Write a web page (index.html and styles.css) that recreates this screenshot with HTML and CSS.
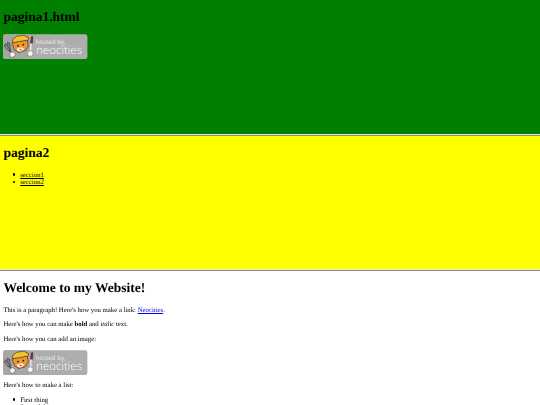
FILE: index.html
```html
<!DOCTYPE html>
<html lang="en">
<head>
<meta charset="utf-8">
<title>Frames</title>
<link rel="stylesheet" href="styles.css">
</head>
<body>
<section class="frame green">
  <h1>pagina1.html</h1>
  <svg class="badge" viewBox="0 0 85 25"><use href="#neo"/></svg>
</section>
<section class="frame yellow">
  <h1>pagina2</h1>
  <ul>
    <li><a href="#s1" class="plain">seccion1</a></li>
    <li><a href="#s2" class="plain">seccion2</a></li>
  </ul>
</section>
<main class="frame welcome">
  <h1>Welcome to my Website!</h1>
  <p>This is a paragraph! Here's how you make a link: <a href="#n">Neocities</a>.</p>
  <p>Here's how you can make <strong>bold</strong> and <em>italic</em> text.</p>
  <p>Here's how you can add an image:</p>
  <svg class="badge" viewBox="0 0 85 25">
    <defs>
      <g id="neo">
        <rect width="85" height="25" rx="2.500" fill="#adadad"/>
        <path d="M0 2.500A2.500 2.500 0 0 1 2.500 0H26V25H2.500A2.500 2.500 0 0 1 0 22.500Z" fill="#a6a6a6"/>
        <path d="M7.500 16L2.500 9.500L1.500 12L4.500 16L7 17M7.500 16L6.500 9L4.500 8L5 12" stroke="#3f3f3f" stroke-width=".8" fill="#8f8f8f"/>
        <path d="M6.500 16L11 23" stroke="#3f3f3f" stroke-width="1.200"/>
        <path d="M10 8.500L9.500 5.500L14 2L21 1L26 3.500L25 6.500L14 9Z" fill="#f0c22e" stroke="#4a3a14" stroke-width=".7"/>
        <path d="M9 9L13 8L24.500 6L25.500 12L22.500 16.500L16 18.500L11.500 15.500Z" fill="#ec9638" stroke="#4a2f14" stroke-width=".7"/>
        <path d="M13.500 14.500L18.500 13L21.500 14.500L18.500 17.500L15 17Z" fill="#fff0d8"/>
        <path d="M16.500 14.500L19.500 15L17.500 16.500Z" fill="#c2402a"/>
        <circle cx="15" cy="11.500" r=".9" fill="#222"/>
        <circle cx="20.500" cy="10.500" r=".9" fill="#222"/>
        <circle cx="9.500" cy="20.500" r="2.800" fill="#f7f3e8" stroke="#555" stroke-width=".6"/>
        <path d="M28.300 9L27.800 17" stroke="#eee" stroke-width="1.300"/>
        <path d="M27.500 9L28.300 2.500L30.300 2L30 9Z" fill="#7e2c28" stroke="#444" stroke-width=".3"/>
        <circle cx="27.500" cy="19.500" r="2.800" fill="#f8f8f8" stroke="#666" stroke-width=".5"/>
        <text x="33" y="9.800" class="hosted">hosted by,</text>
        <text x="33.500" y="19.500" class="neo-word">neocities</text>
      </g>
    </defs>
    <use href="#neo"/>
  </svg>
  <p>Here's how to make a list:</p>
  <ul>
    <li>First thing</li>
    <li>Second thing</li>
  </ul>
</main>
</body>
</html>
```
FILE: styles.css
```css
html, body { margin: 0; padding: 0; height: 100%; overflow: hidden; }
body { font-family: "Liberation Serif", "Times New Roman", serif; font-size: 6.750px; line-height: 7.760px; color: #000; background: #fff; text-rendering: geometricPrecision; filter: blur(.3px); }
.frame { box-sizing: border-box; padding: 0 3.375px; display: flow-root; overflow: hidden; }
.green { height: 135px; background: #008000; border-bottom: 1px solid #e4e8e4; }
.yellow { height: 135px; background: #ff0; border-top: 1px solid #8a8a8a; border-bottom: 1px solid #e8e8d8; }
.welcome { height: 135px; border-top: 1px solid #8a8a8a; }
.badge { display: block; width: 84.400px; height: 25.300px; }
h1 { font-size: 13.500px; line-height: 15.520px; margin: 9px 0; }
ul { margin: 6.750px 0; padding-left: 16.875px; list-style: none; }
h1 + p, h1 + ul { margin-top: 11px; }
li::before { content: ""; display: inline-block; width: 2.200px; height: 2.200px; border-radius: 50%; background: #000; margin-left: -7px; margin-right: 4.800px; vertical-align: 1px; }
p { margin: 6.750px 0; }
a { color: #00e; }
a.plain { color: #000; }
.hosted { font: 6.200px "Open Sans", sans-serif; fill: #eee; }
.neo-word { font: 300 11.500px "Open Sans", sans-serif; fill: #fff; }
```
